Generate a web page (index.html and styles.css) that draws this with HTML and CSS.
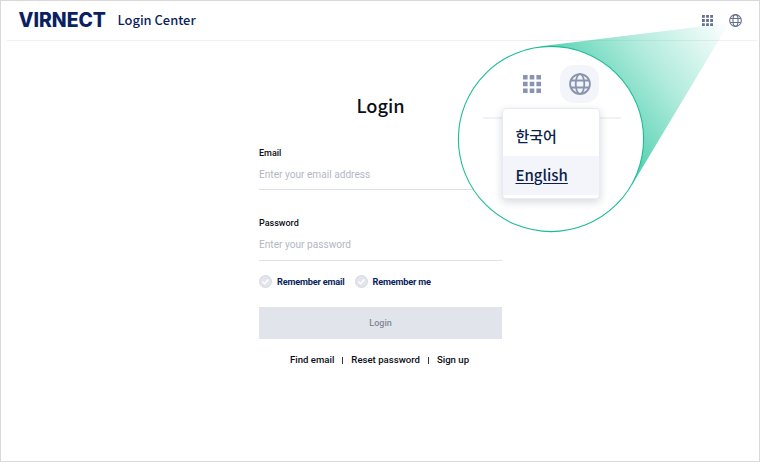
FILE: index.html
```html
<!DOCTYPE html>
<html lang="en">
<head>
<meta charset="utf-8">
<title>Login Center</title>
<link rel="stylesheet" href="styles.css">
</head>
<body>
<svg class="defs" width="0" height="0" aria-hidden="true">
  <symbol id="globe" viewBox="0 0 24 24">
    <g fill="none" stroke="currentColor" stroke-width="2">
      <circle cx="12" cy="12" r="10.8"/>
      <ellipse cx="12" cy="12" rx="4.7" ry="10.8"/>
      <path d="M2.2 8.2h19.6M2.2 15.8h19.6"/>
    </g>
  </symbol>
  <symbol id="apps" viewBox="0 0 18 18">
    <path fill="currentColor" d="M0 0h4.6v4.6H0zM6.7 0h4.6v4.6H6.7zM13.4 0H18v4.6h-4.6zM0 6.7h4.6v4.6H0zM6.7 6.7h4.6v4.6H6.7zM13.4 6.7H18v4.6h-4.6zM0 13.4h4.6V18H0zM6.7 13.4h4.6V18H6.7zM13.4 13.4H18V18h-4.6z"/>
  </symbol>
</svg>
<div class="page">
  <header class="topbar">
    <svg class="logo" width="90" height="16"><text x="0.5" y="15" textLength="87.5" lengthAdjust="spacingAndGlyphs">VIRNECT</text></svg>
    <span class="product">Login Center</span>
    <div class="actions">
      <svg class="apps-small"><use href="#apps"/></svg>
      <svg class="globe-small"><use href="#globe"/></svg>
    </div>
  </header>
  <main class="login">
    <h1>Login</h1>
    <label class="name">Email</label>
    <div class="field">Enter your email address</div>
    <label class="name second">Password</label>
    <div class="field">Enter your password</div>
    <div class="checks">
      <span class="check"><svg viewBox="0 0 13 13"><circle cx="6.5" cy="6.5" r="6" fill="#e3e5ec" stroke="#d5d8e1"/><path d="M3.6 6.8l2 2 3.9-4.3" fill="none" stroke="#fff" stroke-width="1.4"/></svg><span>Remember email</span></span>
      <span class="check"><svg viewBox="0 0 13 13"><circle cx="6.5" cy="6.5" r="6" fill="#e3e5ec" stroke="#d5d8e1"/><path d="M3.6 6.8l2 2 3.9-4.3" fill="none" stroke="#fff" stroke-width="1.4"/></svg><span>Remember me</span></span>
    </div>
    <div class="submit">Login</div>
    <nav class="links"><span>Find email</span><i></i><span>Reset password</span><i></i><span>Sign up</span></nav>
  </main>
  <svg class="beam" width="760" height="462" viewBox="0 0 760 462">
    <defs>
      <linearGradient id="fade" gradientUnits="userSpaceOnUse" x1="729" y1="23" x2="590" y2="130">
        <stop offset="0" stop-color="#14c397" stop-opacity="0"/>
        <stop offset=".5" stop-color="#14c397" stop-opacity=".34"/>
        <stop offset="1" stop-color="#10bd93" stop-opacity=".78"/>
      </linearGradient>
    </defs>
    <path fill="url(#fade)" d="M729 23L541 46.3L551 139L632 185Z"/>
    <circle cx="551" cy="139" r="92.6" fill="#fff" stroke="#1bbd95" stroke-width="1.1"/>
  </svg>
  <section class="lens">
    <div class="lens-bar">
      <svg class="apps-large"><use href="#apps"/></svg>
      <span class="globe-button"><svg><use href="#globe"/></svg></span>
    </div>
    <div class="menu">
      <div class="option">한국어</div>
      <div class="option active"><span>English</span></div>
    </div>
  </section>
</div>
</body>
</html>
```
FILE: styles.css
```css
* { box-sizing: border-box; }
body { margin: 0; background: #fff; font-family: Roboto, sans-serif; color: #0b0e16; }
.defs { position: absolute; }
.page { position: relative; width: 760px; height: 462px; border: 1px solid #d9d9d9; overflow: hidden; }
.topbar { display: flex; align-items: center; height: 40px; margin: 0 2px 0 6px; padding-left: 11px; border-bottom: 1px solid #eff0f5; color: #0b1f5c; }
.logo { display: block; font: 800 19.5px Inter, sans-serif; fill: #0b1f63; overflow: visible; margin-top: -1px; }
.product { margin-left: 9.5px; margin-top: -1px; font: 500 12.9px/20px "Noto Sans CJK KR", sans-serif; white-space: nowrap; }
.actions { display: flex; align-items: center; gap: 16px; margin-left: auto; padding-right: 15px; color: #64718f; }
.apps-small { width: 11px; height: 11px; }
.globe-small { width: 13px; height: 13px; }
.login { width: 243px; margin-left: 258px; padding-top: 50px; }
h1 { margin: 0; height: 28px; text-align: center; font: 500 18.2px/28px "Noto Sans CJK KR", sans-serif; }
.name { display: block; margin-top: 27px; height: 14px; font-size: 9px; line-height: 14px; font-weight: 500; }
.name.second { margin-top: 26px; }
.field { height: 30px; border-bottom: 1px solid #dfe1e9; font-size: 10.15px; line-height: 30px; color: #b3b7c4; }
.name.second + .field { height: 31px; }
.checks { display: flex; gap: 10px; margin-top: 14px; height: 13px; font-size: 9.2px; letter-spacing: -.19px; line-height: 13px; font-weight: 700; color: #0b1f5c; }
.check { display: flex; gap: 5px; }
.check svg { width: 13px; height: 13px; }
.submit { margin-top: 19px; height: 32px; background: #e1e4ea; color: #808796; font-size: 9px; font-weight: 500; line-height: 33px; text-align: center; }
.links { display: flex; align-items: center; justify-content: center; margin: 12px 2px 0 0; font-size: 9.6px; line-height: 17px; font-weight: 500; }
.links i { width: 1px; height: 7px; margin: 2px 8px 0; background: #33363d; }
.beam { position: absolute; left: -1px; top: -1px; }
.lens { position: absolute; left: 482px; top: 63px; width: 138px; }
.lens-bar { display: flex; align-items: center; height: 55px; padding-left: 40px; padding-bottom: 13px; border-bottom: 2px solid #f1f2f7; color: #8995ae; }
.apps-large { width: 18px; height: 18px; }
.globe-button { display: grid; place-items: center; width: 39px; height: 38px; margin-left: 19px; border-radius: 14px; background: #f4f5fa; }
.globe-button svg { width: 22px; height: 22px; }
.menu { position: relative; width: 98px; height: 91px; margin: -11px 0 0 18.5px; padding-top: 8px; background: #fff; border: 1px solid #e9ebf2; border-radius: 4px; box-shadow: 0 3px 8px rgba(30, 40, 80, .18); color: #0b1f4c; font: 500 15px/37px "Noto Sans CJK KR", sans-serif; }
.option { height: 39px; padding-left: 13px; }
.active { background: #f4f5fa; text-decoration: underline; text-decoration-thickness: 1px; text-underline-offset: 2px; }
```
